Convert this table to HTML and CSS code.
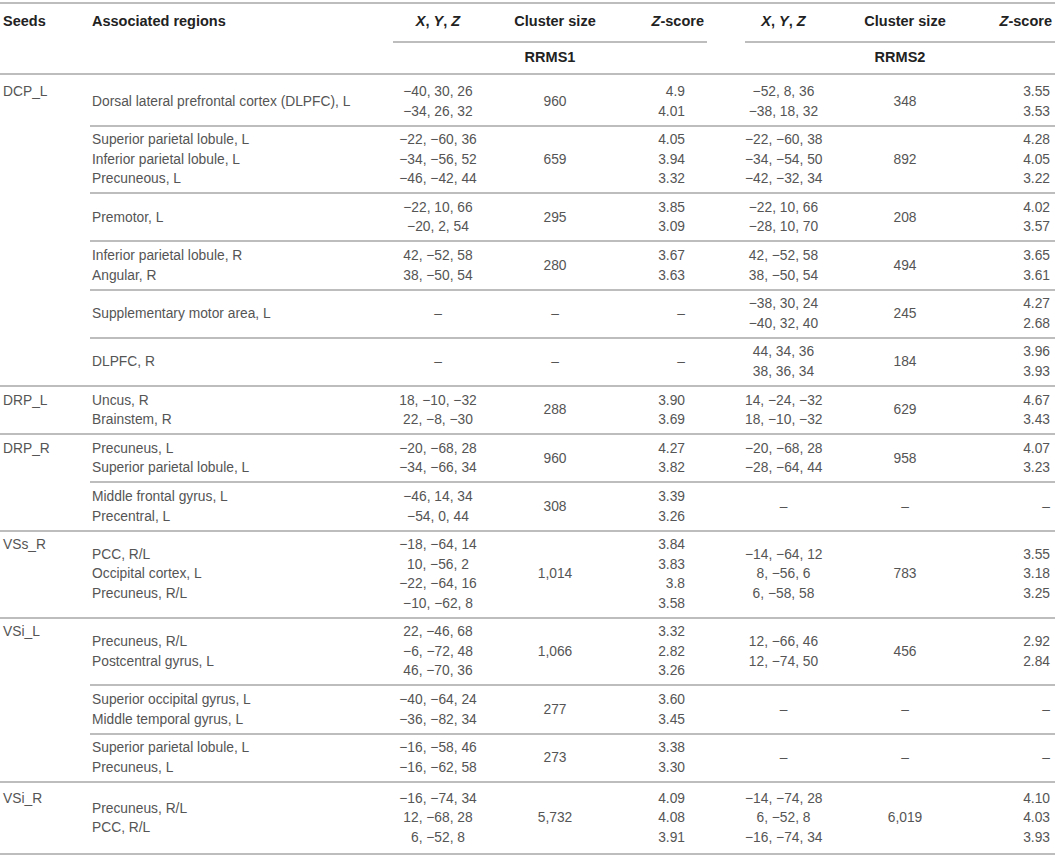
FILE: index.html
```html
<!DOCTYPE html>
<html lang="en">
<head>
    <meta charset="UTF-8">
    <meta name="viewport" content="width=device-width, initial-scale=1.0">
    <title>Seed connectivity clusters</title>
    <link rel="stylesheet" href="styles.css">
</head>
<body>
    <table class="results">
        <colgroup>
            <col class="w-seed">
            <col class="w-region">
            <col class="w-xyz1">
            <col class="w-size1">
            <col class="w-z1">
            <col class="w-gap">
            <col class="w-xyz2">
            <col class="w-size2">
            <col class="w-z2">
        </colgroup>
        <thead>
            <tr class="head-main">
                <th class="seed" rowspan="2">Seeds</th>
                <th class="region" rowspan="2">Associated regions</th>
                <th class="sub"><i>X</i>, <i>Y</i>, <i>Z</i></th>
                <th class="sub">Cluster size</th>
                <th class="sub z1"><i>Z</i>-score</th>
                <th class="gap" rowspan="2"></th>
                <th class="sub"><i>X</i>, <i>Y</i>, <i>Z</i></th>
                <th class="sub">Cluster size</th>
                <th class="sub z2"><i>Z</i>-score</th>
            </tr>
            <tr class="head-group">
                <th colspan="3">RRMS1</th>
                <th colspan="3">RRMS2</th>
            </tr>
        </thead>
        <tbody>
            <tr class="first">
                <td class="seed" rowspan="6">DCP_L</td>
                <td class="region">Dorsal lateral prefrontal cortex (DLPFC), L</td>
                <td>&minus;40, 30, 26<br>&minus;34, 26, 32</td>
                <td>960</td>
                <td class="z1">4.9<br>4.01</td>
                <td></td>
                <td>&minus;52, 8, 36<br>&minus;38, 18, 32</td>
                <td>348</td>
                <td class="z2">3.55<br>3.53</td>
            </tr>
            <tr>
                <td class="region">Superior parietal lobule, L<br>Inferior parietal lobule, L<br>Precuneous, L</td>
                <td>&minus;22, &minus;60, 36<br>&minus;34, &minus;56, 52<br>&minus;46, &minus;42, 44</td>
                <td>659</td>
                <td class="z1">4.05<br>3.94<br>3.32</td>
                <td></td>
                <td>&minus;22, &minus;60, 38<br>&minus;34, &minus;54, 50<br>&minus;42, &minus;32, 34</td>
                <td>892</td>
                <td class="z2">4.28<br>4.05<br>3.22</td>
            </tr>
            <tr>
                <td class="region">Premotor, L</td>
                <td>&minus;22, 10, 66<br>&minus;20, 2, 54</td>
                <td>295</td>
                <td class="z1">3.85<br>3.09</td>
                <td></td>
                <td>&minus;22, 10, 66<br>&minus;28, 10, 70</td>
                <td>208</td>
                <td class="z2">4.02<br>3.57</td>
            </tr>
            <tr>
                <td class="region">Inferior parietal lobule, R<br>Angular, R</td>
                <td>42, &minus;52, 58<br>38, &minus;50, 54</td>
                <td>280</td>
                <td class="z1">3.67<br>3.63</td>
                <td></td>
                <td>42, &minus;52, 58<br>38, &minus;50, 54</td>
                <td>494</td>
                <td class="z2">3.65<br>3.61</td>
            </tr>
            <tr>
                <td class="region">Supplementary motor area, L</td>
                <td>&ndash;</td>
                <td>&ndash;</td>
                <td class="z1">&ndash;</td>
                <td></td>
                <td>&minus;38, 30, 24<br>&minus;40, 32, 40</td>
                <td>245</td>
                <td class="z2">4.27<br>2.68</td>
            </tr>
            <tr>
                <td class="region">DLPFC, R</td>
                <td>&ndash;</td>
                <td>&ndash;</td>
                <td class="z1">&ndash;</td>
                <td></td>
                <td>44, 34, 36<br>38, 36, 34</td>
                <td>184</td>
                <td class="z2">3.96<br>3.93</td>
            </tr>
            <tr>
                <td class="seed">DRP_L</td>
                <td class="region">Uncus, R<br>Brainstem, R</td>
                <td>18, &minus;10, &minus;32<br>22, &minus;8, &minus;30</td>
                <td>288</td>
                <td class="z1">3.90<br>3.69</td>
                <td></td>
                <td>14, &minus;24, &minus;32<br>18, &minus;10, &minus;32</td>
                <td>629</td>
                <td class="z2">4.67<br>3.43</td>
            </tr>
            <tr>
                <td class="seed" rowspan="2">DRP_R</td>
                <td class="region">Precuneus, L<br>Superior parietal lobule, L</td>
                <td>&minus;20, &minus;68, 28<br>&minus;34, &minus;66, 34</td>
                <td>960</td>
                <td class="z1">4.27<br>3.82</td>
                <td></td>
                <td>&minus;20, &minus;68, 28<br>&minus;28, &minus;64, 44</td>
                <td>958</td>
                <td class="z2">4.07<br>3.23</td>
            </tr>
            <tr>
                <td class="region">Middle frontal gyrus, L<br>Precentral, L</td>
                <td>&minus;46, 14, 34<br>&minus;54, 0, 44</td>
                <td>308</td>
                <td class="z1">3.39<br>3.26</td>
                <td></td>
                <td>&ndash;</td>
                <td>&ndash;</td>
                <td class="z2">&ndash;</td>
            </tr>
            <tr>
                <td class="seed">VSs_R</td>
                <td class="region">PCC, R/L<br>Occipital cortex, L<br>Precuneus, R/L</td>
                <td>&minus;18, &minus;64, 14<br>10, &minus;56, 2<br>&minus;22, &minus;64, 16<br>&minus;10, &minus;62, 8</td>
                <td>1,014</td>
                <td class="z1">3.84<br>3.83<br>3.8<br>3.58</td>
                <td></td>
                <td>&minus;14, &minus;64, 12<br>8, &minus;56, 6<br>6, &minus;58, 58</td>
                <td>783</td>
                <td class="z2">3.55<br>3.18<br>3.25</td>
            </tr>
            <tr>
                <td class="seed" rowspan="3">VSi_L</td>
                <td class="region">Precuneus, R/L<br>Postcentral gyrus, L</td>
                <td>22, &minus;46, 68<br>&minus;6, &minus;72, 48<br>46, &minus;70, 36</td>
                <td>1,066</td>
                <td class="z1">3.32<br>2.82<br>3.26</td>
                <td></td>
                <td>12, &minus;66, 46<br>12, &minus;74, 50</td>
                <td>456</td>
                <td class="z2">2.92<br>2.84</td>
            </tr>
            <tr>
                <td class="region">Superior occipital gyrus, L<br>Middle temporal gyrus, L</td>
                <td>&minus;40, &minus;64, 24<br>&minus;36, &minus;82, 34</td>
                <td>277</td>
                <td class="z1">3.60<br>3.45</td>
                <td></td>
                <td>&ndash;</td>
                <td>&ndash;</td>
                <td class="z2">&ndash;</td>
            </tr>
            <tr>
                <td class="region">Superior parietal lobule, L<br>Precuneus, L</td>
                <td>&minus;16, &minus;58, 46<br>&minus;16, &minus;62, 58</td>
                <td>273</td>
                <td class="z1">3.38<br>3.30</td>
                <td></td>
                <td>&ndash;</td>
                <td>&ndash;</td>
                <td class="z2">&ndash;</td>
            </tr>
            <tr class="last">
                <td class="seed">VSi_R</td>
                <td class="region">Precuneus, R/L<br>PCC, R/L</td>
                <td>&minus;16, &minus;74, 34<br>12, &minus;68, 28<br>6, &minus;52, 8</td>
                <td>5,732</td>
                <td class="z1">4.09<br>4.08<br>3.91</td>
                <td></td>
                <td>&minus;14, &minus;74, 28<br>6, &minus;52, 8<br>&minus;16, &minus;74, 34</td>
                <td>6,019</td>
                <td class="z2">4.10<br>4.03<br>3.93</td>
            </tr>
        </tbody>
    </table>
</body>
</html>
```

FILE: styles.css
```css
body {
    margin: 0;
    background: #fff;
    font-family: 'Liberation Sans', Arial, sans-serif;
    color: #555;
}
.results {
    width: 1055px;
    margin-top: 2px;
    border-collapse: collapse;
    table-layout: fixed;
    font-size: 13.8px;
    line-height: 19.5px;
    border-top: 2px solid #bdbdbd;
    border-bottom: 2px solid #bdbdbd;
}
.w-seed { width: 90px; }
.w-region { width: 303px; }
.w-xyz1 { width: 90px; }
.w-size1 { width: 144px; }
.w-z1 { width: 80px; }
.w-gap { width: 38px; }
.w-xyz2 { width: 77px; }
.w-size2 { width: 166px; }
.w-z2 { width: 67px; }

.results th {
    font-size: 14.5px;
    font-weight: bold;
    color: #222;
    text-align: center;
    white-space: nowrap;
    padding: 0;
}
.head-main th {
    height: 29px;
    vertical-align: top;
    padding-top: 8px;
}
.head-main th.sub {
    border-bottom: 2px solid #bdbdbd;
}
.head-main th.seed,
.head-main th.region {
    text-align: left;
}
.head-main th.seed { padding-left: 3px; }
.head-main th.region { padding-left: 2px; }
.head-main th.z1,
.head-main th.z2 {
    text-align: right;
    padding-right: 3px;
}
.head-group th {
    height: 30px;
}

.results td {
    border-top: 2px solid #bdbdbd;
    padding: 3.6px 0;
    text-align: center;
    vertical-align: middle;
    white-space: nowrap;
}
.results td.seed {
    text-align: left;
    vertical-align: top;
    padding-left: 3px;
}
.results td.region {
    text-align: left;
    padding-left: 2px;
}
.results td.z1 {
    text-align: right;
    padding-right: 22px;
}
.results td.z2 {
    text-align: right;
    padding-right: 5px;
}
.first td {
    padding-top: 7px;
}
.last td {
    padding: 6px 0;
}
.last td.seed {
    padding-left: 3px;
}
```
